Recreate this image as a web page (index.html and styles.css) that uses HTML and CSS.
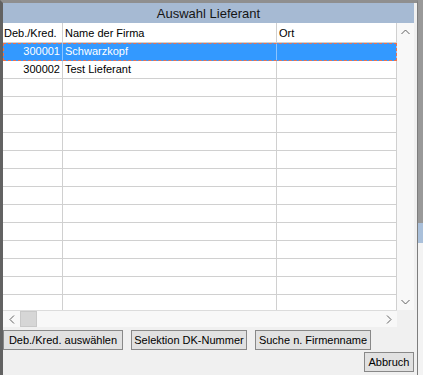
FILE: index.html
```html
<!DOCTYPE html>
<html lang="de">
<head>
<meta charset="utf-8">
<title>Auswahl Lieferant</title>
<link rel="stylesheet" href="styles.css">
</head>
<body>
<div class="desk">
  <div class="window">
    <div class="title">Auswahl Lieferant</div>
    <div class="gridbox">
      <div class="viewport">
        <div class="table">
          <div class="row head">
            <div class="c c1">Deb./Kred.</div>
            <div class="c c2">Name der Firma</div>
            <div class="c c3">Ort</div>
          </div>
          <div class="row sel">
            <div class="c c1 num">300001</div>
            <div class="c c2">Schwarzkopf</div>
            <div class="c c3"></div>
          </div>
          <div class="row">
            <div class="c c1 num">300002</div>
            <div class="c c2">Test Lieferant</div>
            <div class="c c3"></div>
          </div>
          <div class="row"><div class="c"></div><div class="c"></div><div class="c"></div></div>
          <div class="row"><div class="c"></div><div class="c"></div><div class="c"></div></div>
          <div class="row"><div class="c"></div><div class="c"></div><div class="c"></div></div>
          <div class="row"><div class="c"></div><div class="c"></div><div class="c"></div></div>
          <div class="row"><div class="c"></div><div class="c"></div><div class="c"></div></div>
          <div class="row"><div class="c"></div><div class="c"></div><div class="c"></div></div>
          <div class="row"><div class="c"></div><div class="c"></div><div class="c"></div></div>
          <div class="row"><div class="c"></div><div class="c"></div><div class="c"></div></div>
          <div class="row"><div class="c"></div><div class="c"></div><div class="c"></div></div>
          <div class="row"><div class="c"></div><div class="c"></div><div class="c"></div></div>
          <div class="row"><div class="c"></div><div class="c"></div><div class="c"></div></div>
          <div class="row"><div class="c"></div><div class="c"></div><div class="c"></div></div>
          <div class="row"><div class="c"></div><div class="c"></div><div class="c"></div></div>
        </div>
        <div class="vscroll">
          <div class="arrow">
            <svg width="9" height="6" viewBox="0 0 9 6"><polyline points="0.5,5 4.5,1 8.5,5" fill="none" stroke="#606060" stroke-width="1"/></svg>
          </div>
          <div class="track"></div>
          <div class="arrow">
            <svg width="9" height="6" viewBox="0 0 9 6"><polyline points="0.5,1 4.5,5 8.5,1" fill="none" stroke="#606060" stroke-width="1"/></svg>
          </div>
        </div>
      </div>
      <div class="hbar">
        <div class="hscroll">
          <div class="arrow">
            <svg width="6" height="9" viewBox="0 0 6 9"><polyline points="5,0.5 1,4.5 5,8.5" fill="none" stroke="#606060" stroke-width="1"/></svg>
          </div>
          <div class="thumb"></div>
          <div class="track"></div>
          <div class="arrow">
            <svg width="6" height="9" viewBox="0 0 6 9"><polyline points="1,0.5 5,4.5 1,8.5" fill="none" stroke="#606060" stroke-width="1"/></svg>
          </div>
        </div>
        <div class="corner"></div>
      </div>
    </div>
    <div class="buttons">
      <button class="btn w120">Deb./Kred. auswählen</button>
      <button class="btn w116">Selektion DK-Nummer</button>
      <button class="btn w116">Suche n. Firmenname</button>
    </div>
    <div class="cancel-row">
      <button class="btn w50">Abbruch</button>
    </div>
  </div>
  <div class="backdrop">
    <div class="bd-gray"></div>
    <div class="bd-blue"></div>
    <div class="bd-light"></div>
  </div>
</div>
</body>
</html>
```

FILE: styles.css
```css
html, body {
  margin: 0;
  padding: 0;
}
body {
  font-family: "Liberation Sans", Arial, sans-serif;
  font-size: 11px;
  color: #000;
  background: #f0f0f0;
}
.desk {
  display: flex;
  width: 423px;
  height: 375px;
  overflow: hidden;
}
.window {
  box-sizing: border-box;
  width: 418px;
  height: 375px;
  border-top: 3px solid #8f8f8f;
  border-left: 3px solid #626262;
  border-right: 1px solid #7d7d7d;
  padding-right: 3px;
  background: #f0f0f0;
  display: flex;
  flex-direction: column;
}
.title {
  height: 20px;
  line-height: 21px;
  background: #a6bad3;
  color: #151515;
  font-size: 13px;
  text-align: center;
}
.gridbox {
  display: flex;
  flex-direction: column;
  height: 304px;
}
.viewport {
  display: flex;
  height: 287px;
}
.table {
  width: 394px;
  height: 287px;
  overflow: hidden;
  background: #fff;
}
.row {
  display: grid;
  grid-template-columns: 60px 214px 120px;
  height: 18px;
}
.c {
  box-sizing: border-box;
  height: 18px;
  border-right: 1px solid #d0d0d0;
  border-bottom: 1px solid #d0d0d0;
  padding: 0 2px;
  line-height: 17px;
  white-space: nowrap;
  overflow: hidden;
}
.head {
  height: 20px;
}
.head .c {
  height: 20px;
  line-height: 20px;
}
.head .c1 {
  padding-left: 1px;
}
.num {
  text-align: right;
}
.sel {
  outline: 1px dashed #f0704a;
  outline-offset: -1px;
}
.sel .c {
  background: #3399ff;
  color: #fff;
  border-right-color: #8cc4ff;
  border-bottom-color: #3399ff;
}
.vscroll {
  width: 17px;
  display: flex;
  flex-direction: column;
  background: #f8f8f8;
}
.arrow {
  width: 17px;
  height: 17px;
  display: flex;
  align-items: center;
  justify-content: center;
  flex: none;
}
.track {
  flex: 1;
}
.hbar {
  display: flex;
  height: 17px;
}
.hscroll {
  width: 394px;
  display: flex;
  background: #f8f8f8;
  border-top: 1px solid #dcdcdc;
  box-sizing: border-box;
}
.hscroll .arrow {
  height: 16px;
}
.thumb {
  width: 17px;
  box-sizing: border-box;
  background: #d6d6d6;
  border: 1px solid #c8c8c8;
}
.corner {
  flex: 1;
  background: #f0f0f0;
}
.buttons {
  display: flex;
  gap: 8px;
  margin-top: 3px;
}
.cancel-row {
  display: flex;
  justify-content: flex-end;
  margin-top: 2px;
}
.btn {
  height: 20px;
  box-sizing: border-box;
  padding: 0;
  margin: 0;
  border: 1px solid #888;
  border-radius: 0;
  background: #e1e1e1;
  font-family: "Liberation Sans", Arial, sans-serif;
  font-size: 11px;
  color: #000;
  white-space: nowrap;
}
.w120 { width: 120px; }
.w116 { width: 116px; }
.w50 { width: 50px; }
.backdrop {
  width: 5px;
  display: flex;
  flex-direction: column;
}
.bd-gray {
  height: 223px;
  background: #999;
}
.bd-blue {
  height: 20px;
  background: #aac0da;
}
.bd-light {
  flex: 1;
  background: #f3f3f3;
}
```
